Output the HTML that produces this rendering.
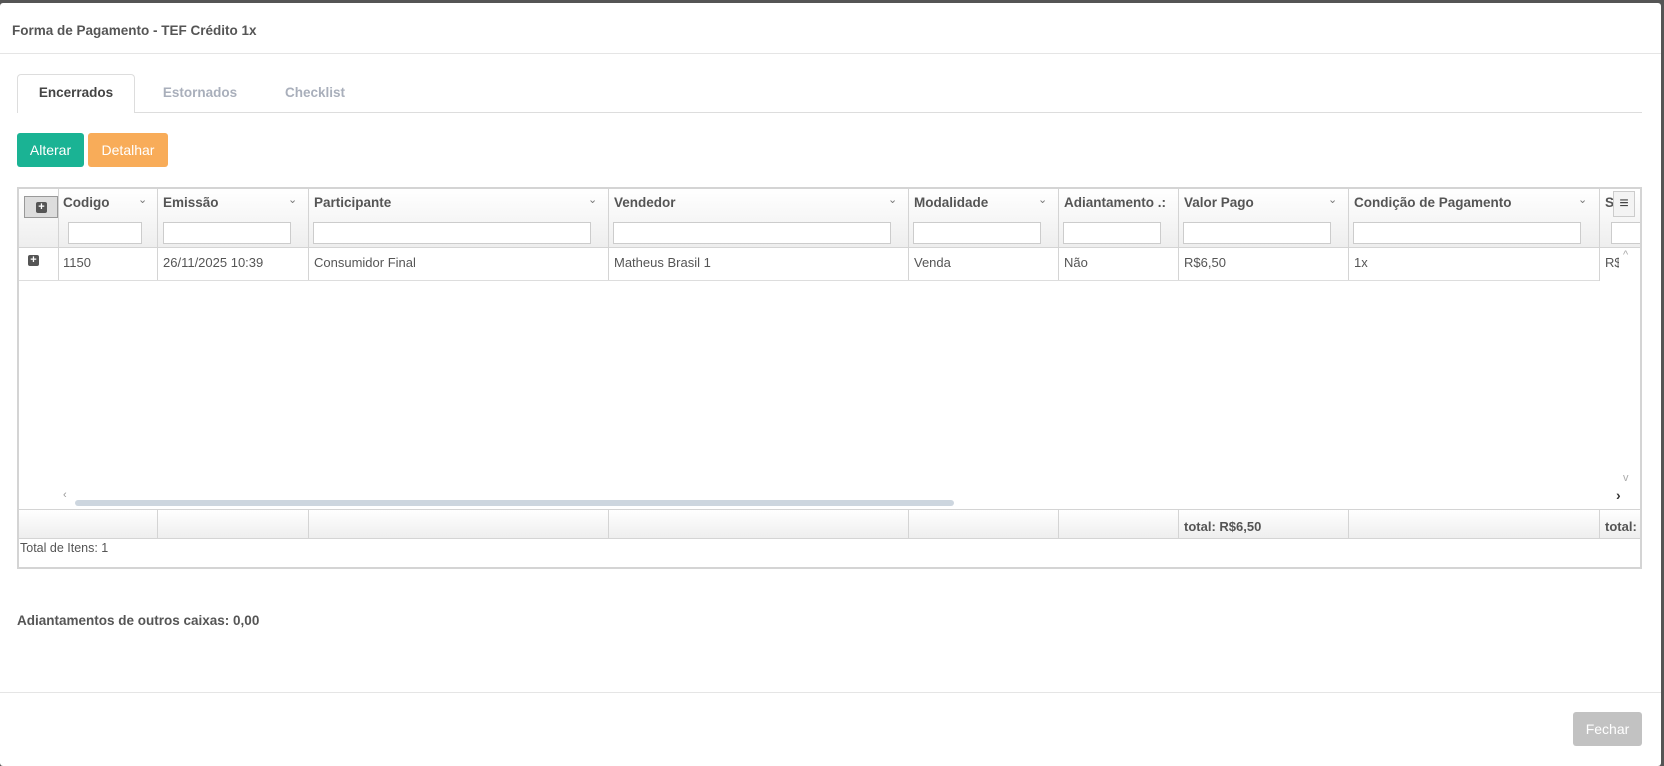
<!DOCTYPE html>
<html><head><meta charset="utf-8"><style>
*{box-sizing:border-box;margin:0;padding:0}
body{width:1664px;height:766px;background:#555;font-family:"Liberation Sans",sans-serif;font-size:13px;color:#555;position:relative;overflow:hidden}
.modal{position:absolute;left:0;top:3px;width:1661px;height:763px;background:#fff;border-radius:3px}
.abs{position:absolute}
.title{left:12px;top:20px;font-weight:bold;font-size:13.5px;color:#555}
.hline{left:0;width:1661px;height:1px;background:#e5e5e5}
.tab{top:71px;height:39px;line-height:37px;font-weight:bold;font-size:13.5px;text-align:center}
.btn{top:130px;height:34px;line-height:34px;color:#fff;font-size:14px;text-align:center;border-radius:3px}
.grid{left:17px;top:184px;width:1625px;height:382px;border:2px solid #d4d4d4;overflow:hidden}
.hdr{position:absolute;left:0;top:0;width:100%;height:59px;background:linear-gradient(#fff,#eee);border-bottom:1px solid #d4d4d4}
.col{position:absolute;top:0;height:100%;border-left:1px solid #d4d4d4}
.hc{position:absolute;top:0;height:59px;border-left:1px solid #d4d4d4}
.rc{position:absolute;top:59px;height:33px;border-left:1px solid #d4d4d4}
.ht{position:absolute;top:6px;font-weight:bold;font-size:13.5px;color:#555;white-space:nowrap}
.arr{position:absolute;top:4px;font-size:11px;color:#777}
.inp{position:absolute;top:33px;height:22px;border:1px solid #ccc;background:#fff}
.cell{position:absolute;top:66px;font-size:13px;color:#555;white-space:nowrap}
.ftr{position:absolute;left:0;top:320px;width:100%;height:30px;background:linear-gradient(#fff,#eee);border-top:1px solid #d4d4d4;border-bottom:1px solid #d4d4d4}
.ft{position:absolute;top:9px;font-weight:bold;font-size:13px}
.plus{position:absolute;width:11px;height:11px;background:#555;border-radius:2px;color:#fff;font-size:11px;line-height:11px;text-align:center;font-weight:bold}
</style></head><body>
<div class="modal">
<div class="abs title">Forma de Pagamento - TEF Crédito 1x</div>
<div class="abs hline" style="top:50px"></div>
<div class="abs" style="left:17px;top:71px;width:118px;height:39px;border:1px solid #ddd;border-bottom:none;border-radius:4px 4px 0 0;background:#fff;z-index:2"></div>
<div class="abs" style="left:17px;top:109px;width:1625px;height:1px;background:#ddd"></div>
<div class="abs tab" style="left:17px;width:118px;color:#444;z-index:3">Encerrados</div>
<div class="abs tab" style="left:145px;width:110px;color:#a9afbb">Estornados</div>
<div class="abs tab" style="left:260px;width:110px;color:#a9afbb">Checklist</div>
<div class="abs btn" style="left:17px;width:67px;background:#1ab394">Alterar</div>
<div class="abs btn" style="left:88px;width:80px;background:#f8ac59">Detalhar</div>
<div class="abs grid">
 <div class="hdr"></div>
 <div class="abs" style="left:5px;top:7px;width:34px;height:22px;border:1px solid #999;background:#ddd"><div class="plus" style="left:11px;top:5px">+</div></div>
 <div class="hc" style="left:39px"></div><div class="hc" style="left:138px"></div><div class="hc" style="left:289px"></div><div class="hc" style="left:589px"></div><div class="hc" style="left:889px"></div><div class="hc" style="left:1039px"></div><div class="hc" style="left:1159px"></div><div class="hc" style="left:1329px"></div><div class="hc" style="left:1580px"></div>
 <div class="rc" style="left:39px"></div><div class="rc" style="left:138px"></div><div class="rc" style="left:289px"></div><div class="rc" style="left:589px"></div><div class="rc" style="left:889px"></div><div class="rc" style="left:1039px"></div><div class="rc" style="left:1159px"></div><div class="rc" style="left:1329px"></div><div class="rc" style="left:1580px"></div>
 <div class="ht" style="left:44px">Codigo</div><div class="arr" style="left:119px">⌄</div>
 <div class="ht" style="left:144px">Emissão</div><div class="arr" style="left:269px">⌄</div>
 <div class="ht" style="left:295px">Participante</div><div class="arr" style="left:569px">⌄</div>
 <div class="ht" style="left:595px">Vendedor</div><div class="arr" style="left:869px">⌄</div>
 <div class="ht" style="left:895px">Modalidade</div><div class="arr" style="left:1019px">⌄</div>
 <div class="ht" style="left:1045px">Adiantamento .:</div>
 <div class="ht" style="left:1165px">Valor Pago</div><div class="arr" style="left:1309px">⌄</div>
 <div class="ht" style="left:1335px">Condição de Pagamento</div><div class="arr" style="left:1559px">⌄</div>
 <div class="ht" style="left:1586px">S</div>
 <div class="abs" style="left:1594px;top:2px;width:22px;height:26px;background:#f3f3f3;border:1px solid #ccc;text-align:center;font-size:16px;line-height:24px;color:#444">≡</div>
 <div class="inp" style="left:49px;width:74px"></div><div class="inp" style="left:144px;width:128px"></div><div class="inp" style="left:294px;width:278px"></div><div class="inp" style="left:594px;width:278px"></div><div class="inp" style="left:894px;width:128px"></div><div class="inp" style="left:1044px;width:98px"></div><div class="inp" style="left:1164px;width:148px"></div><div class="inp" style="left:1334px;width:228px"></div><div class="inp" style="left:1592px;width:30px"></div>
 <div class="abs" style="left:0;top:91px;width:1580px;height:1px;background:#ddd"></div>
 <div class="plus" style="left:9px;top:66px">+</div>
 <div class="cell" style="left:44px">1150</div>
 <div class="cell" style="left:144px">26/11/2025 10:39</div>
 <div class="cell" style="left:295px">Consumidor Final</div>
 <div class="cell" style="left:595px">Matheus Brasil 1</div>
 <div class="cell" style="left:895px">Venda</div>
 <div class="cell" style="left:1045px">Não</div>
 <div class="cell" style="left:1165px">R$6,50</div>
 <div class="cell" style="left:1335px">1x</div>
 <div class="cell" style="left:1586px;width:14px;overflow:hidden">R$6</div>
 <div class="abs" style="left:1600px;top:59px;width:25px;height:261px;background:#fff"></div>
 <div class="abs" style="left:1604px;top:60px;font-size:11px;color:#aaa">^</div>
 <div class="abs" style="left:1604px;top:283px;font-size:11px;color:#aaa">v</div>
 <div class="abs" style="left:44px;top:300px;font-size:11px;color:#999">‹</div>
 <div class="abs" style="left:56px;top:311px;width:879px;height:6px;background:#cdd6df;border-radius:3px"></div>
 <div class="abs" style="left:1597px;top:298px;font-size:14px;color:#333;font-weight:bold">›</div>
 <div class="ftr">
  <div class="col" style="left:138px"></div><div class="col" style="left:289px"></div><div class="col" style="left:589px"></div><div class="col" style="left:889px"></div><div class="col" style="left:1039px"></div><div class="col" style="left:1159px"></div><div class="col" style="left:1329px"></div><div class="col" style="left:1580px"></div>
  <div class="ft" style="left:1165px">total: R$6,50</div>
  <div class="ft" style="left:1586px">total:</div>
 </div>
 <div class="abs" style="left:1px;top:352px;font-size:12.5px;color:#555">Total de Itens: 1</div>
</div>
<div class="abs" style="left:17px;top:610px;font-weight:bold;font-size:13.5px;color:#555">Adiantamentos de outros caixas: 0,00</div>
<div class="abs hline" style="top:689px"></div>
<div class="abs btn" style="left:1573px;top:709px;width:69px;background:#c2c2c2">Fechar</div>
</div>
</body></html>
